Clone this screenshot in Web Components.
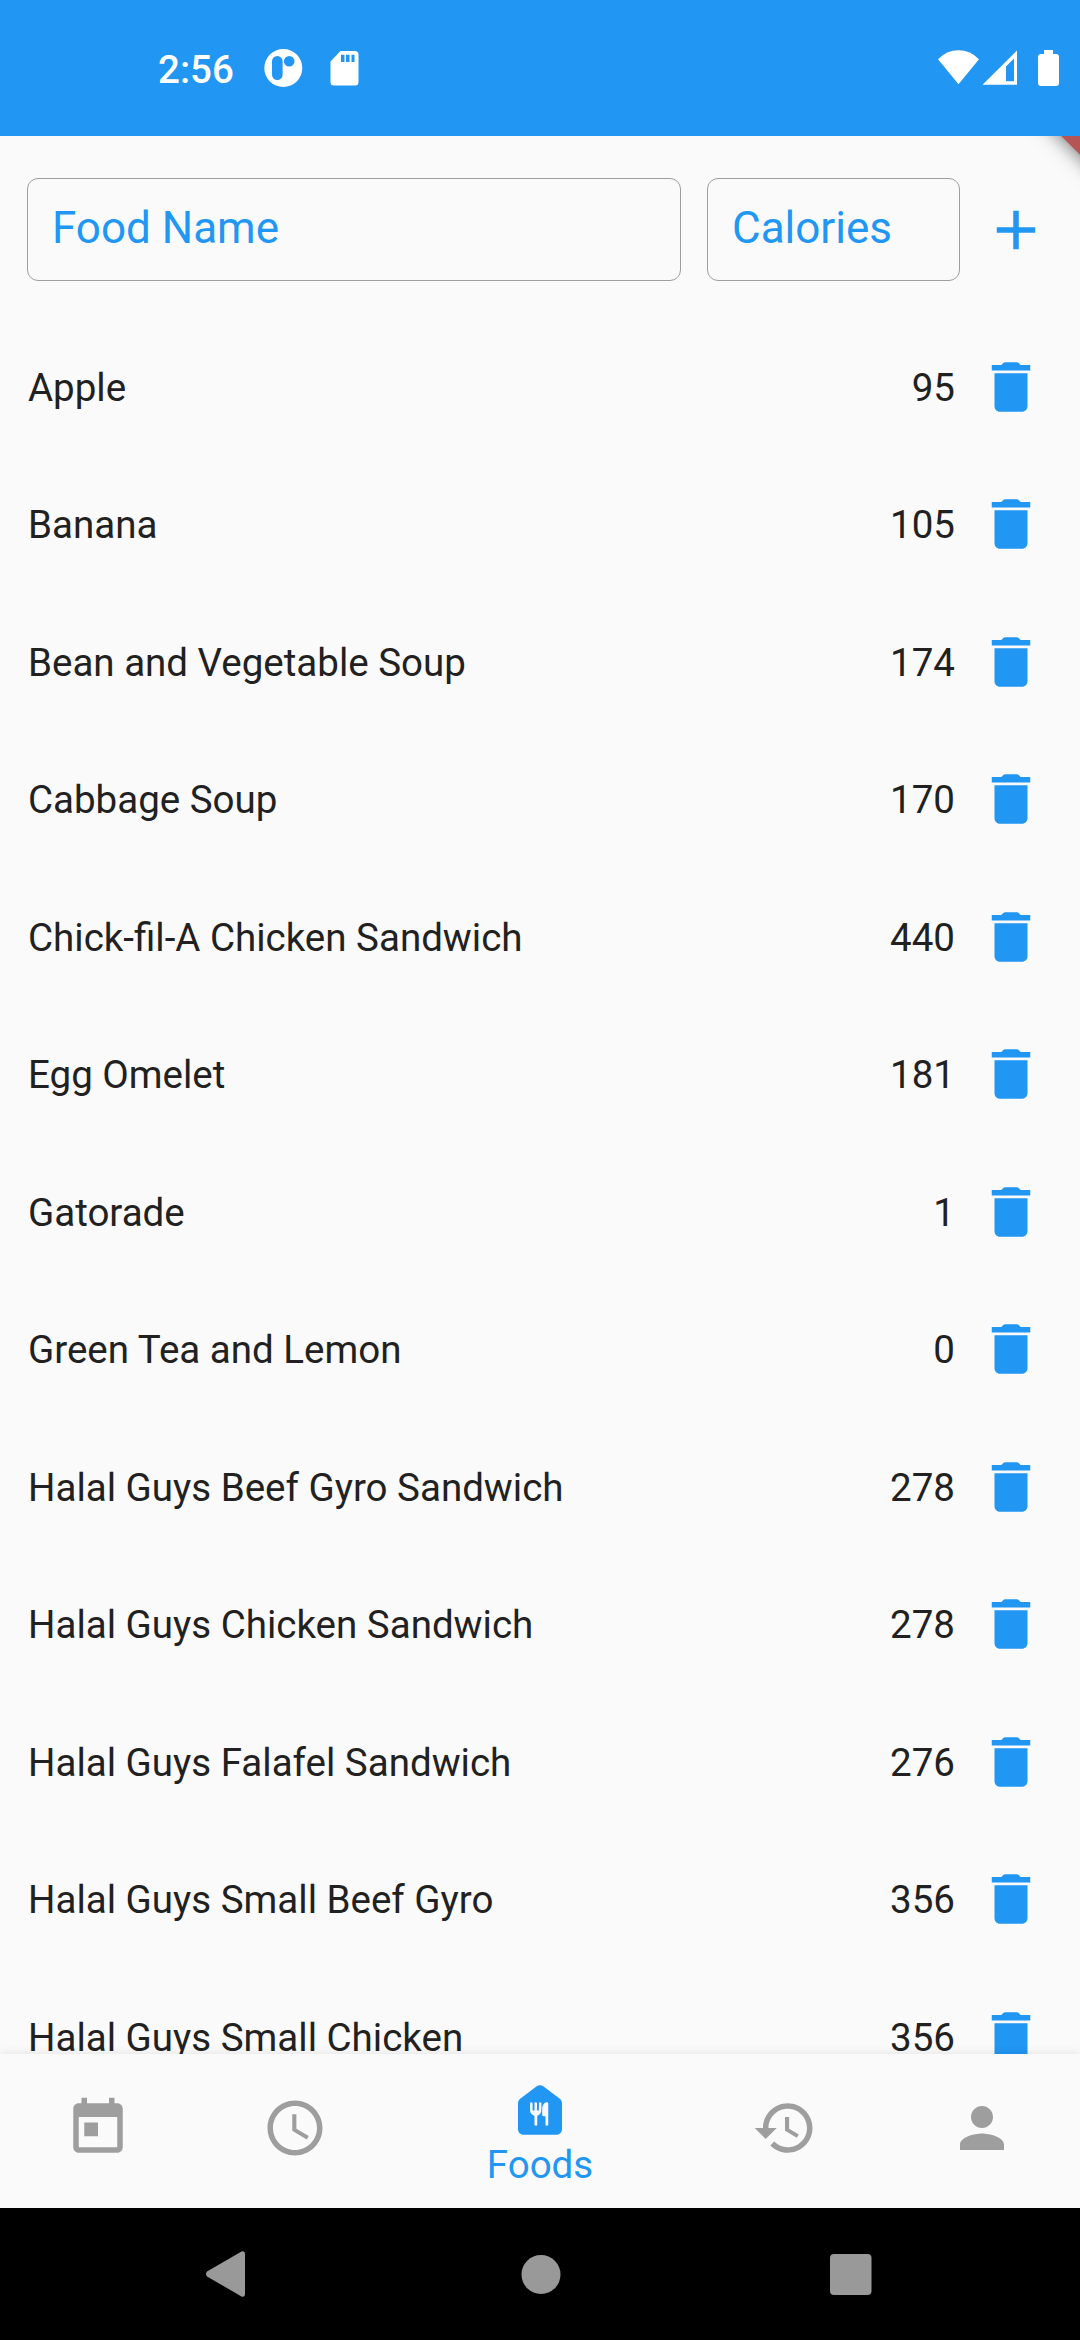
<!DOCTYPE html>
<html lang="en">
<head>
<meta charset="utf-8">
<title>Foods</title>
<style>
html,body{margin:0;padding:0;background:#fafafa}
body{width:1080px;height:2340px;overflow:hidden;font-family:Roboto,"Liberation Sans",sans-serif}
</style>
</head>
<body>
<foods-app></foods-app>
<script>
const define = (name, html, setup) => customElements.define(name, class extends HTMLElement {
  constructor() {
    super();
    this.attachShadow({ mode: 'open' }).innerHTML = html;
  }
  connectedCallback() { if (setup) setup(this, this.shadowRoot); }
});

const ICONS = {
  add: '<path d="M19 13h-6v6h-2v-6H5v-2h6V5h2v6h6z"/>',
  delete: '<path d="M6 19c0 1.1.9 2 2 2h8c1.1 0 2-.9 2-2V7H6v12zM19 4h-3.5l-.7-.7c-.2-.2-.45-.3-.7-.3H9.9c-.25 0-.5.1-.7.3l-.7.7H5v2h14V4z"/>',
  today: '<path d="M19 3h-1V1h-2v2H8V1H6v2H5c-1.11 0-1.99.9-1.99 2L3 19c0 1.1.89 2 2 2h14c1.1 0 2-.9 2-2V5c0-1.1-.9-2-2-2zm0 16H5V8h14v11zM7 10h5v5H7z"/>',
  clock: '<path d="M11.99 2C6.47 2 2 6.48 2 12s4.47 10 9.99 10C17.52 22 22 17.52 22 12S17.52 2 11.99 2zM12 20c-4.42 0-8-3.58-8-8s3.58-8 8-8 8 3.58 8 8-3.58 8-8 8zm.5-13H11v6l5.25 3.15.75-1.23-4.5-2.67z"/>',
  foods: '<path fill-rule="evenodd" d="M10.8 3.4 4.8 7.9C4.3 8.28 4 8.87 4 9.5V19c0 1.1.9 2 2 2h12c1.1 0 2-.9 2-2V9.5c0-.63-.3-1.22-.8-1.6l-6-4.5c-.71-.53-1.69-.53-2.4 0zM12.5 12.2c0 .95-.7 1.7-1.5 1.85v3.2a.5.5 0 0 1-1 0v-3.200c-.9-.15-1.600-.9-1.600-1.850V9.600a.45.45 0 0 1 .9 0v2.600h.7V9.600a.45.45 0 0 1 .9 0v2.600h.7V9.600a.45.45 0 0 1 .9 0zM14 17.250V14.300h-.7a.5.5 0 0 1-.5-.5v-2.300c0-1.200.6-2.150 1.500-2.330.35-.07.7.18.7.48v7.600a.5.5 0 0 1-1 0z"/>',
  history: '<path d="M13 3c-4.97 0-9 4.03-9 9H1l3.89 3.89.07.14L9 12H6c0-3.87 3.13-7 7-7s7 3.13 7 7-3.13 7-7 7c-1.93 0-3.68-.79-4.94-2.06l-1.42 1.42C8.27 19.99 10.51 21 13 21c4.97 0 9-4.03 9-9s-4.03-9-9-9zm-1 5v5l4.28 2.54.72-1.21-3.5-2.08V8z"/>',
  person: '<path d="M12 12c2.21 0 4-1.79 4-4s-1.79-4-4-4-4 1.79-4 4 1.790 4 4 4zm0 2c-2.670 0-8 1.340-8 4v2h16v-2c0-2.660-5.330-4-8-4z"/>'
};

define('md-icon', '<style>:host{display:block;width:66px;height:66px;flex:none}svg{display:block;width:66px;height:66px;fill:currentColor}</style><svg viewBox="0 0 24 24"></svg>',
  (el, root) => { root.querySelector('svg').innerHTML = ICONS[el.getAttribute('name')]; });

define('status-bar', `
<style>
:host{display:flex;justify-content:space-between;box-sizing:border-box;height:136px;background:#2196f3;color:#fff;padding:46px 21px 0 158px}
div{display:flex;align-items:flex-start}
span{font-size:38.5px;font-weight:500;line-height:45px;width:106px;margin-top:1px}
svg{display:block;fill:#fff}
</style>
<div><span>2:56</span>
<svg width="100" height="46"><path fill-rule="evenodd" d="M19.300 3a19 19 0 1 0 0 38a19 19 0 1 0 0-38zM13.300 10a5.300 5.300 0 0 0-5.300 5.300v13.400a5.300 5.300 0 0 0 10.600 0v-13.400a5.300 5.300 0 0 0-5.300-5.300zM25.200 10a5.300 5.300 0 1 0 0 10.600a5.300 5.300 0 0 0 0-10.600z"/><path fill-rule="evenodd" d="M76.500 5h14.500a3.500 3.500 0 0 1 3.500 3.500v27.500a3.500 3.500 0 0 1-3.500 3.500H70a3.500 3.500 0 0 1-3.500-3.500V15.500zM77 8.700v7.300h3.500V8.700zM82 8.700v7.300h3.500V8.700zM87.500 8.700v7.300h3V8.700z"/></svg></div>
<svg width="122" height="46"><path d="M1 13.300Q9.500 4.300 21.500 4.300T42 13.300L21.500 38.300z"/><path fill-rule="evenodd" d="M80 4.600V38.800H45.500zM77 12.500L69 20.500V35.200H77z"/><path d="M107 4h9v4h3a3 3 0 0 1 3 3v26a3 3 0 0 1-3 3h-15a3 3 0 0 1-3-3V11a3 3 0 0 1 3-3h3z"/></svg>`);

define('debug-ribbon', `
<style>
:host{display:block;position:absolute;top:136px;right:0;width:110px;height:110px;overflow:hidden;pointer-events:none}
i{position:absolute;display:block;width:220px;height:33px;left:2.7px;top:-18.2px;transform:rotate(45deg);background:#b65556;box-shadow:0 0 20px rgba(0,0,0,.6)}
</style><i></i>`);

define('outlined-field', `
<style>
:host{display:flex;box-sizing:border-box;height:103px;border:1px solid #9e9e9e;border-radius:11px;padding:0 24px;align-items:center;color:#2196f3;font-size:44px}
span{line-height:52px;padding-bottom:3px;white-space:nowrap}
</style><span><slot></slot></span>`);

define('add-food-form', `
<style>
:host{display:flex;padding:42px 0 0 27px;height:140px}
.name{width:654px;margin-right:26px}.cal{width:253px;margin-right:22.5px}
md-icon{color:#2196f3;margin-top:19px}
</style>
<outlined-field class="name">Food Name</outlined-field><outlined-field class="cal">Calories</outlined-field><md-icon name="add"></md-icon>`);

define('food-row', `
<style>
:host{display:flex;align-items:center;height:137.5px;padding:0 36px 0 28px;color:#212121;font-size:38.5px;line-height:45px}
span{padding-top:1.3px}
.n{flex:1}.c{margin-right:23px}
md-icon{color:#2196f3}
</style><span class="n"><slot></slot></span><span class="c"><slot name="calories"></slot></span><md-icon name="delete"></md-icon>`);

const FOODS = [['Apple',95],['Banana',105],['Bean and Vegetable Soup',174],['Cabbage Soup',170],['Chick-fil-A Chicken Sandwich',440],['Egg Omelet',181],['Gatorade',1],['Green Tea and Lemon',0],['Halal Guys Beef Gyro Sandwich',278],['Halal Guys Chicken Sandwich',278],['Halal Guys Falafel Sandwich',276],['Halal Guys Small Beef Gyro',356],['Halal Guys Small Chicken',356]];
define('food-list', '<style>:host{display:block;flex:1;min-height:0;overflow:hidden}</style>',
  (el, root) => { root.innerHTML += FOODS.map(([n, c]) => `<food-row>${n}<span slot="calories">${c}</span></food-row>`).join(''); });

define('nav-item', `
<style>
:host{display:flex;flex:1 1 0;flex-direction:column;align-items:center;justify-content:center;box-sizing:border-box;padding-bottom:6px;color:#9e9e9e}
:host([selected]){flex-grow:1.5;color:#2196f3;justify-content:flex-start;padding:22.5px 0 0}
span{font-size:38.5px;line-height:45px;margin-top:-.5px}
span:empty{display:none}
</style><div></div><span></span>`,
  (el, root) => {
    root.querySelector('div').innerHTML = `<md-icon name="${el.getAttribute('icon')}"></md-icon>`;
    root.querySelector('span').textContent = el.getAttribute('label') || '';
  });

define('bottom-nav', `
<style>:host{display:flex;height:154px;background:#fafafa;position:relative;box-shadow:0 0 9px rgba(0,0,0,.11)}</style>
<nav-item icon="today"></nav-item><nav-item icon="clock"></nav-item><nav-item icon="foods" label="Foods" selected></nav-item><nav-item icon="history"></nav-item><nav-item icon="person"></nav-item>`);

define('system-nav', `
<style>:host{display:flex;height:132px;background:#000;align-items:center;justify-content:space-between;padding:0 208px 0 205px;position:relative}
svg{display:block;fill:#999}</style>
<svg width="42" height="50"><path d="M2 22.500L36.500 2.600Q40 1.200 40 5V45Q40 48.800 36.500 47.400L2 27.500Q0 25 2 22.500z"/></svg>
<svg width="46" height="42"><circle cx="25" cy="21.500" r="19.500"/></svg>
<svg width="42" height="42"><rect x="0" y="1" width="41.500" height="41" rx="4"/></svg>`);

define('foods-app', `
<style>:host{display:flex;flex-direction:column;width:1080px;height:2340px;background:#fafafa;position:relative;overflow:hidden}
status-bar,add-food-form,bottom-nav,system-nav{flex:none}</style>
<status-bar></status-bar><add-food-form></add-food-form><food-list></food-list><bottom-nav></bottom-nav><system-nav></system-nav><debug-ribbon></debug-ribbon>`);
</script>
</body>
</html>
